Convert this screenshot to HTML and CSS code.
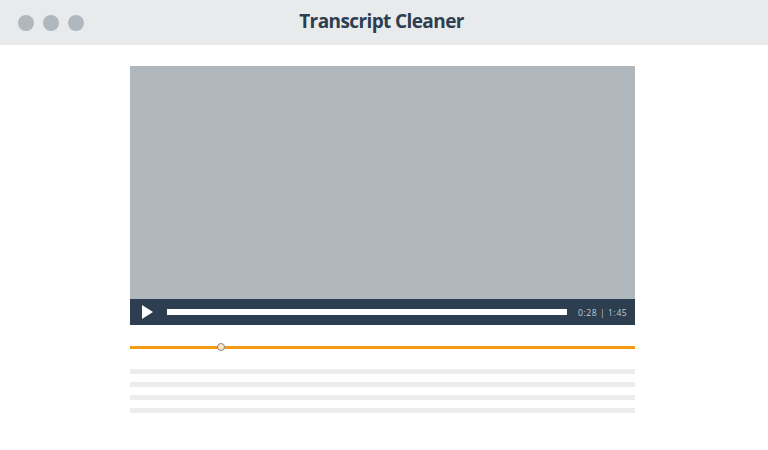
FILE: index.html
```html
<!DOCTYPE html>
<html>
<head>
<meta charset="utf-8">
<link rel="stylesheet" href="styles.css">
</head>
<body>
<div class="window">
  <header class="titlebar">
    <div class="dots"><span class="dot"></span><span class="dot"></span><span class="dot"></span></div>
    <h1 class="title">Transcript Cleaner</h1>
  </header>
  <main class="content">
    <div class="video">
      <div class="screen"></div>
      <div class="controls">
        <svg class="play" width="11" height="14" viewBox="0 0 11 14"><polygon points="0,0 11,7 0,14" fill="#ffffff"/></svg>
        <div class="progress"></div>
        <span class="time">0:28 | 1:45</span>
      </div>
    </div>
    <div class="timeline">
      <div class="track"></div>
      <span class="knob"></span>
    </div>
    <div class="lines">
      <div class="line"></div>
      <div class="line"></div>
      <div class="line"></div>
      <div class="line"></div>
    </div>
  </main>
</div>
</body>
</html>
```

FILE: styles.css
```css
* { box-sizing: border-box; margin: 0; padding: 0; }
html, body { width: 768px; height: 450px; background: #ffffff; overflow: hidden; }
body { font-family: "Open Sans", "Liberation Sans", sans-serif; }
.titlebar {
  position: relative;
  height: 45px;
  background: #e9eaec;
  display: flex;
  align-items: center;
  justify-content: center;
}
.dots {
  position: absolute;
  left: 18px;
  top: 15px;
  display: flex;
  gap: 9px;
}
.dot { width: 16px; height: 16px; border-radius: 50%; background: #b0b7bd; }
.title {
  font-size: 19px;
  font-weight: 700;
  color: #2c3e50;
  letter-spacing: -0.6px;
  line-height: 1;
  margin-top: -2px;
  margin-left: -5px;
}
.content {
  width: 505px;
  margin: 21px 0 0 130px;
}
.screen { height: 233px; background: #b0b7bd; }
.controls {
  height: 26px;
  background: #2c3e50;
  display: flex;
  align-items: center;
  padding-left: 12px;
}
.play { display: block; flex: none; }
.progress { width: 400px; height: 6px; background: #ffffff; margin-left: 14px; }
.time {
  margin-left: 11px;
  font-size: 8.5px;
  color: #c5cbd1;
  letter-spacing: 0.6px;
  white-space: nowrap;
}
.timeline { position: relative; margin-top: 21px; height: 3px; }
.track { height: 3px; background: #f39c12; }
.knob {
  position: absolute;
  left: 87px;
  top: -3px;
  width: 8px;
  height: 8px;
  border-radius: 50%;
  background: #fde5c4;
  border: 1px solid #7f8790;
}
.lines { margin-top: 20px; display: flex; flex-direction: column; gap: 8px; }
.line { height: 5px; background: #ececec; }
```
